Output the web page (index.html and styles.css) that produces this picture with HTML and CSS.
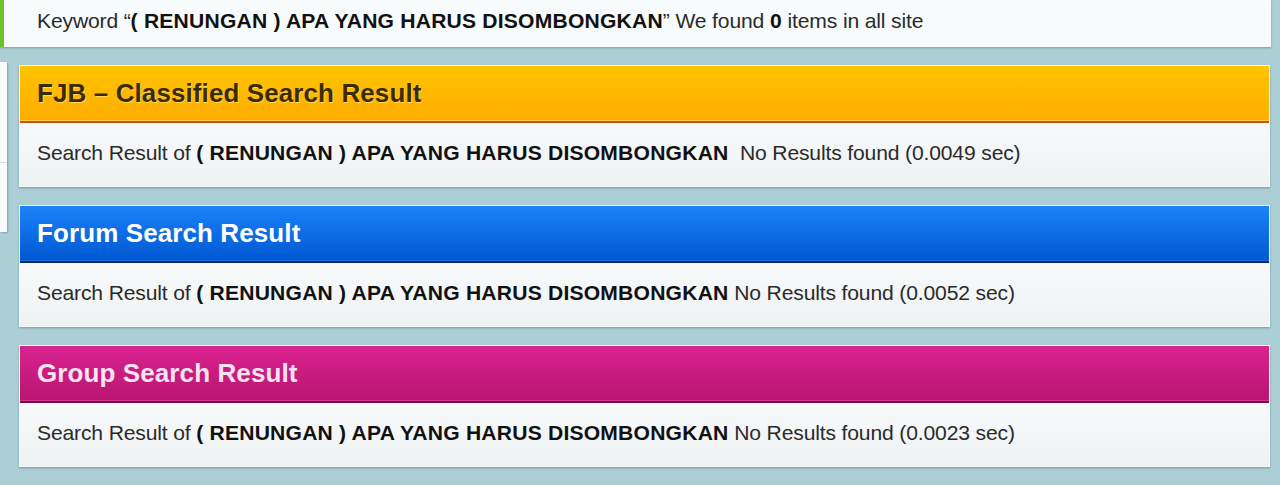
FILE: index.html
```html
<!DOCTYPE html>
<html lang="id">
<head>
<meta charset="utf-8">
<title>Search Result</title>
<link rel="stylesheet" href="styles.css">
</head>
<body>
<div class="keyword-bar">
  Keyword “<b>( RENUNGAN ) APA YANG HARUS DISOMBONGKAN</b>” We found <b>0</b> items in all site
</div>
<div class="main">
  <aside class="side-strip">
    <div class="seg seg-top"></div>
    <div class="seg seg-bottom"></div>
  </aside>
  <div class="results">
    <section class="result-card fjb">
      <h2 class="card-head">FJB – Classified Search Result</h2>
      <div class="card-body">Search Result of <b>( RENUNGAN ) APA YANG HARUS DISOMBONGKAN</b>&nbsp; No Results found (0.0049 sec)</div>
    </section>
    <section class="result-card forum">
      <h2 class="card-head">Forum Search Result</h2>
      <div class="card-body">Search Result of <b>( RENUNGAN ) APA YANG HARUS DISOMBONGKAN</b> No Results found (0.0052 sec)</div>
    </section>
    <section class="result-card group">
      <h2 class="card-head">Group Search Result</h2>
      <div class="card-body">Search Result of <b>( RENUNGAN ) APA YANG HARUS DISOMBONGKAN</b> No Results found (0.0023 sec)</div>
    </section>
  </div>
</div>
</body>
</html>
```
FILE: styles.css
```css
html, body {
  margin: 0;
  padding: 0;
}
body {
  background: #abcfd4;
  font-family: "Liberation Sans", Arial, sans-serif;
  color: #222;
  width: 1280px;
  height: 485px;
  overflow: hidden;
}
b {
  font-weight: bold;
  color: #111;
  letter-spacing: 0.2px;
}
.keyword-bar {
  box-sizing: border-box;
  width: 1271px;
  height: 47px;
  background: #f8fbfc;
  border-left: 4px solid #6cc22c;
  padding: 9px 0 0 33px;
  font-size: 21.1px;
  line-height: 24px;
  letter-spacing: -0.15px;
  color: #2a2a2a;
  box-shadow: 0 1px 2px rgba(60, 100, 110, 0.45);
}
.main {
  display: flex;
  align-items: flex-start;
  gap: 12px;
  margin-top: 15px;
}
.side-strip {
  width: 7px;
  display: flex;
  flex-direction: column;
  box-shadow: 1px 1px 2px rgba(60, 100, 110, 0.4);
}
.seg {
  background: #fafcfc;
}
.seg-top {
  height: 100px;
  border-bottom: 1px solid #d4dcde;
}
.seg-bottom {
  height: 69px;
}
.results {
  display: flex;
  flex-direction: column;
  gap: 18px;
  padding-top: 3px;
}
.result-card {
  width: 1251px;
  box-sizing: border-box;
  border: 1px solid #f4f8f9;
  background: #f3f5f6;
  box-shadow: 0 1px 2px rgba(50, 90, 100, 0.45);
}
.card-head {
  margin: 0;
  height: 57px;
  box-sizing: border-box;
  padding: 12px 0 0 17px;
  font-size: 26px;
  line-height: 30px;
  letter-spacing: 0.1px;
  font-weight: bold;
}
.fjb .card-head {
  background: linear-gradient(#ffc400, #ffad00);
  color: #3a2c00;
  text-shadow: 1px 1px 0 rgba(255, 230, 130, 0.7);
  border-bottom: 2px solid #c9531a;
  box-shadow: inset 0 -1px 0 #ffd24a;
}
.forum .card-head {
  background: linear-gradient(#1b82fa, #0058d2);
  color: #fff;
  border-bottom: 2px solid #0b2c6e;
  box-shadow: inset 0 -1px 0 #1e6ad8;
}
.group .card-head {
  background: linear-gradient(#d9238f, #ba1470);
  color: #fbe3f1;
  border-bottom: 2px solid #7c0b4b;
  box-shadow: inset 0 -1px 0 #cf3a8c;
}
.card-body {
  height: 63px;
  box-sizing: border-box;
  padding: 18px 0 0 17px;
  font-size: 21.1px;
  line-height: 24px;
  letter-spacing: -0.15px;
  color: #2a2a2a;
  background: linear-gradient(#f7f9fa, #eff2f3);
}
```
